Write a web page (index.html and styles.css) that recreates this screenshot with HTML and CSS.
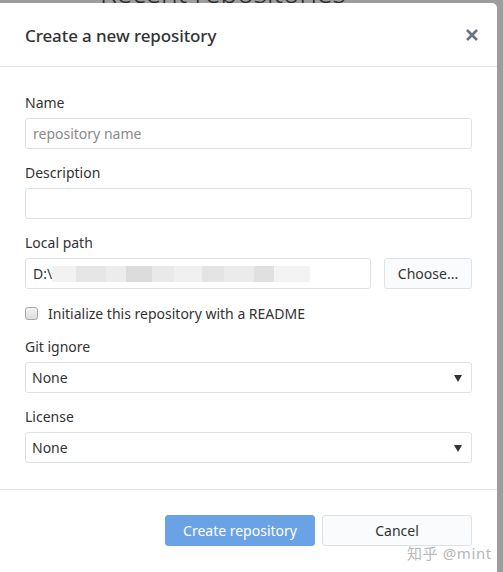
FILE: index.html
```html
<!DOCTYPE html>
<html>
<head>
<meta charset="utf-8">
<link rel="stylesheet" href="styles.css">
</head>
<body>
<div class="backdrop">
  <div class="bg-title">Recent repositories</div>
</div>
<div class="dialog">
  <div class="dialog-header">
    <h1 class="dialog-title">Create a new repository</h1>
    <svg class="close" width="14" height="14" viewBox="0 0 14 14"><path d="M2 2 L12 12 M12 2 L2 12" stroke="#6a737d" stroke-width="2.6" stroke-linecap="butt"/></svg>
  </div>
  <div class="dialog-body">
    <div class="field">
      <label class="label">Name</label>
      <div class="input placeholder">repository name</div>
    </div>
    <div class="field">
      <label class="label">Description</label>
      <div class="input"></div>
    </div>
    <div class="field">
      <label class="label">Local path</label>
      <div class="path-row">
        <div class="input path-input">D:\<span class="blur"><span class="b b1"></span><span class="b b2"></span><span class="b b3"></span><span class="b b4"></span><span class="b b5"></span><span class="b b6"></span><span class="b b7"></span><span class="b b8"></span><span class="b b9"></span><span class="b b10"></span></span></div>
        <button class="btn choose">Choose...</button>
      </div>
    </div>
    <div class="check-row">
      <span class="checkbox"></span>
      <span class="check-label">Initialize this repository with a README</span>
    </div>
    <div class="field">
      <label class="label">Git ignore</label>
      <div class="input select">None<span class="arrow"></span></div>
    </div>
    <div class="field last">
      <label class="label">License</label>
      <div class="input select">None<span class="arrow"></span></div>
    </div>
  </div>
  <div class="dialog-footer">
    <button class="btn primary">Create repository</button>
    <button class="btn cancel">Cancel</button>
  </div>
  <div class="watermark">知乎 @mint</div>
</div>
</body>
</html>
```
FILE: styles.css
```css
* { box-sizing: border-box; }
html, body {
  margin: 0;
  padding: 0;
  width: 503px;
  height: 572px;
  overflow: hidden;
}
body {
  background: #9d9d9d;
  font-family: "Noto Sans", "Open Sans", "Noto Sans CJK SC", sans-serif;
  color: #333;
  position: relative;
}
.backdrop {
  height: 572px;
  padding-left: 100px;
}
.bg-title {
  font-size: 28px;
  line-height: 28px;
  margin-top: -22px;
  color: #2a2a2a;
  font-weight: 300;
  white-space: nowrap;
}
.dialog {
  position: absolute;
  left: 0;
  top: 3px;
  width: 497px;
  height: 580px;
  background: #fff;
  border-top-right-radius: 5px;
}
.dialog-header {
  height: 64px;
  border-bottom: 1px solid #e1e4e8;
  display: flex;
  align-items: center;
  justify-content: space-between;
  padding: 1px 18px 0 25px;
}
.dialog-title {
  margin: 0;
  font-size: 17px;
  font-weight: 500;
  color: #333;
  letter-spacing: -0.1px;
}
.close { display: block; }
.dialog-body {
  padding: 26px 25px 26px 25px;
  border-bottom: 1px solid #e1e4e8;
}
.field { margin-bottom: 14px; }
.field.last { margin-bottom: 0; }
.label {
  display: block;
  font-size: 14px;
  line-height: 20px;
  margin-bottom: 5px;
  color: #333;
}
.input {
  height: 31px;
  border: 1px solid #dfe2e5;
  border-radius: 3px;
  font-size: 14px;
  line-height: 29px;
  padding: 0 7px;
  color: #333;
  background: #fff;
}
.placeholder { color: #8a8a8a; }
.path-row {
  display: flex;
  gap: 13px;
}
.path-input {
  flex: 1;
  display: flex;
  align-items: center;
  overflow: hidden;
}
.blur {
  display: flex;
  height: 16px;
}
.b { display: block; height: 16px; }
.b1 { width: 24px; background: #f2f2f2; }
.b2 { width: 30px; background: #e6e6e6; }
.b3 { width: 20px; background: #ececec; }
.b4 { width: 26px; background: #dcdcdc; }
.b5 { width: 22px; background: #e9e9e9; }
.b6 { width: 28px; background: #f0f0f0; }
.b7 { width: 22px; background: #e4e4e4; }
.b8 { width: 30px; background: #ebebeb; }
.b9 { width: 20px; background: #e0e0e0; }
.b10 { width: 36px; background: #f3f3f3; }
.btn {
  font-family: inherit;
  font-size: 14px;
  height: 31px;
  border-radius: 3px;
  border: 1px solid #dfe2e5;
  background: #fafbfc;
  color: #333;
  padding: 0;
  cursor: pointer;
}
.choose { width: 88px; flex: none; }
.check-row {
  display: flex;
  align-items: center;
  height: 20px;
  margin-bottom: 14px;
}
.checkbox {
  width: 13px;
  height: 13px;
  border: 1px solid #a8a8a8;
  border-radius: 3px;
  background: linear-gradient(#f4f4f4, #dcdcdc);
  margin-right: 10px;
}
.check-label { font-size: 14px; color: #333; }
.select {
  position: relative;
  padding-left: 6px;
}
.arrow {
  position: absolute;
  right: 9px;
  top: 12px;
  width: 0;
  height: 0;
  border-left: 4px solid transparent;
  border-right: 4px solid transparent;
  border-top: 7px solid #333;
}
.dialog-footer {
  display: flex;
  justify-content: flex-end;
  gap: 7px;
  padding: 25px 25px 0 25px;
}
.primary {
  width: 150px;
  background: #6aa3e5;
  border-color: #6aa3e5;
  color: #fff;
}
.cancel { width: 150px; }
.watermark {
  position: absolute;
  left: 407px;
  top: 539px;
  font-size: 15px;
  color: #b8b8b8;
  letter-spacing: 0.6px;
}
```
